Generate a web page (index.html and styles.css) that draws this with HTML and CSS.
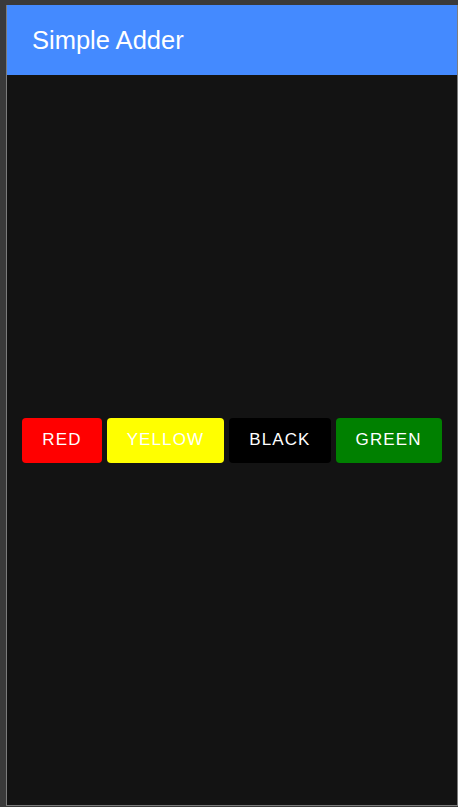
FILE: index.html
```html
<!DOCTYPE html>
<html>
<head>
<meta charset="utf-8">
<link rel="stylesheet" href="styles.css">
</head>
<body>
<div class="frame">
  <div class="app">
    <header class="appbar"><span class="title">Simple Adder</span></header>
    <main class="content">
      <div class="buttons">
        <button class="btn btn-red">RED</button>
        <button class="btn btn-yellow">YELLOW</button>
        <button class="btn btn-black">BLACK</button>
        <button class="btn btn-green">GREEN</button>
      </div>
    </main>
  </div>
</div>
</body>
</html>
```
FILE: styles.css
```css
html, body {
  margin: 0;
  padding: 0;
  background: #3a3a3a;
  font-family: "Liberation Sans", Arial, sans-serif;
}
.frame {
  width: 458px;
  height: 807px;
  box-sizing: border-box;
  padding: 5px 0 1px 6px;
}
.app {
  width: 452px;
  height: 801px;
  box-sizing: border-box;
  border: 1px solid #7c7c7c;
  border-top: none;
  background: #131313;
  display: flex;
  flex-direction: column;
}
.appbar {
  height: 70px;
  flex: 0 0 70px;
  background: #448aff;
  display: flex;
  align-items: center;
  padding-left: 25px;
}
.title {
  color: #ffffff;
  font-size: 25.5px;
  line-height: 1;
  padding-top: 1px;
}
.content {
  flex: 1;
  display: flex;
  align-items: center;
  justify-content: center;
}
.buttons {
  display: flex;
  gap: 5px;
}
.btn {
  height: 45px;
  border: none;
  border-radius: 4px;
  padding: 0 20px;
  color: #ffffff;
  font-family: "Liberation Sans", Arial, sans-serif;
  font-size: 17px;
  letter-spacing: 1.12px;
  cursor: pointer;
}
.btn-red { background: #ff0000; }
.btn-yellow { background: #ffff00; }
.btn-black { background: #000000; }
.btn-green { background: #008000; }
```
